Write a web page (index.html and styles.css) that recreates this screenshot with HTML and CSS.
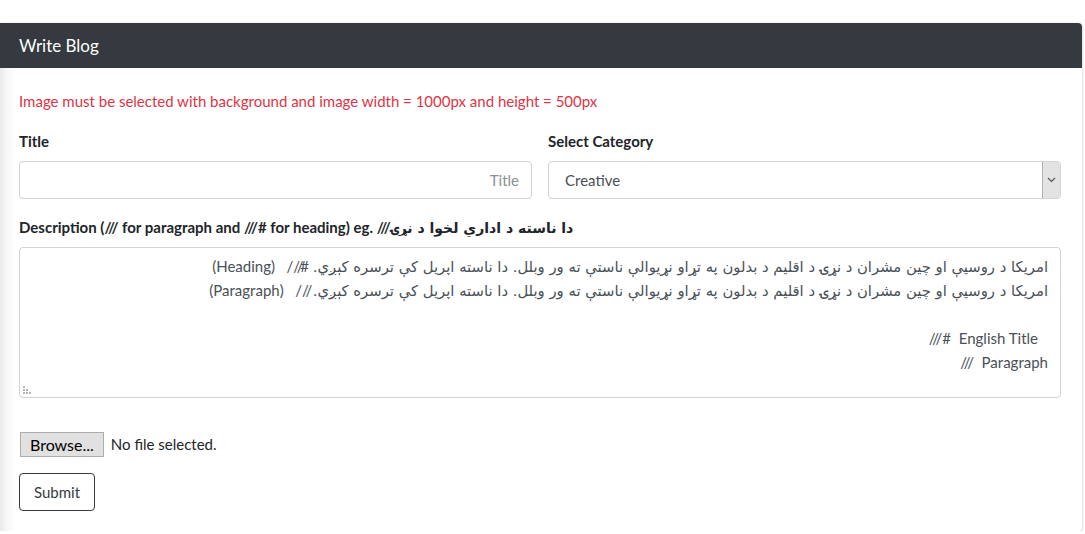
FILE: index.html
```html
<!DOCTYPE html>
<html lang="en">
<head>
<meta charset="utf-8">
<title>Write Blog</title>
<link rel="stylesheet" href="styles.css">
</head>
<body>
<div class="page">
  <div class="card">
    <div class="card-header">Write Blog</div>
    <div class="card-body">
      <p class="notice">Image must be selected with background and image width = 1000px and height = 500px</p>
      <div class="row">
        <div class="group">
          <label class="label">Title</label>
          <div class="input" dir="rtl"><span class="placeholder">Title</span></div>
        </div>
        <div class="group">
          <label class="label">Select Category</label>
          <div class="select">
            <span class="select-value">Creative</span>
            <span class="select-btn"><svg width="9" height="6" viewBox="0 0 9 6"><path d="M1 1 L4.5 4.5 L8 1" fill="none" stroke="#555" stroke-width="1.2"/></svg></span>
          </div>
        </div>
      </div>
      <div class="group">
        <label class="label">Description (/// for paragraph and ///# for heading) eg. ///<span class="ar-label">دا ناسته د اداري لخوا د نړۍ</span></label>
        <div class="textarea" dir="rtl">
          <div class="line"><span class="ar">امريکا د روسيې او چين مشران د نړۍ د اقليم د بدلون په تړاو نړيوالې ناستې ته ور وبلل. دا ناسته اپريل کې ترسره کېږي.</span> <span class="en" dir="ltr">(Heading)&nbsp;&nbsp; ///#</span></div>
          <div class="line"><span class="ar">امريکا د روسيې او چين مشران د نړۍ د اقليم د بدلون په تړاو نړيوالې ناستې ته ور وبلل. دا ناسته اپريل کې ترسره کېږي.</span> <span class="en" dir="ltr">(Paragraph)&nbsp;&nbsp; ///</span></div>
          <div class="line">&nbsp;</div>
          <div class="line"><span class="en trail" dir="ltr">///#&nbsp; English Title</span></div>
          <div class="line"><span class="en" dir="ltr">///&nbsp; Paragraph</span></div>
          <svg class="grip" width="9" height="9" viewBox="0 0 9 9"><g fill="#b5b5b5"><rect x="0" y="0" width="2" height="2"/><rect x="0" y="3" width="2" height="2"/><rect x="3" y="3" width="2" height="2"/><rect x="0" y="6" width="2" height="2"/><rect x="3" y="6" width="2" height="2"/><rect x="6" y="6" width="2" height="2"/></g></svg>
        </div>
      </div>
      <div class="file">
        <span class="browse">Browse...</span>
        <span class="file-name">No file selected.</span>
      </div>
      <button class="submit" type="button">Submit</button>
    </div>
  </div>
</div>
</body>
</html>
```
FILE: styles.css
```css
html, body {
  margin: 0;
  padding: 0;
  background: #fff;
}
body {
  font-family: "Lato", "DejaVu Sans", sans-serif;
  font-size: 15px;
  line-height: 24px;
  color: #212529;
}
.page {
  padding-top: 23px;
}
.card {
  width: 1082px;
  border-radius: 0 4px 4px 0;
  background: linear-gradient(to right, #e9e9e9 0, #f6f6f6 6px, #fff 16px);
  box-shadow: 0 1px 3px rgba(0, 0, 0, 0.25);
  overflow: hidden;
}
.card-header {
  background: #343a40;
  color: #fff;
  font-size: 17px;
  height: 45px;
  line-height: 45px;
  padding: 0 19px;
  box-sizing: border-box;
}
.card-body {
  padding: 21px 21px 20px 19px;
}
.notice {
  margin: 0 0 16px;
  color: #dc3545;
}
.row {
  display: flex;
  gap: 16px;
}
.row .group {
  flex: 1;
}
.group {
  margin-bottom: 16px;
}
.label {
  display: block;
  font-weight: 700;
  margin-bottom: 8px;
  height: 24px;
}
.ar-label {
  font-family: "DejaVu Sans", sans-serif;
  font-size: 14px;
  line-height: 1;
}
.input, .select {
  height: 38px;
  box-sizing: border-box;
  border: 1px solid #ced4da;
  border-radius: 4px;
  background: #fff;
  display: flex;
  align-items: center;
}
.input {
  padding: 0 12px;
}
.placeholder {
  color: #8a9096;
}
.select {
  padding-left: 16px;
  color: #495057;
}
.select-value {
  flex: 1;
}
.select-btn {
  width: 17px;
  align-self: stretch;
  background: #e3e3e3;
  border-left: 1px solid #b3b3b3;
  border-radius: 0 3px 3px 0;
  display: flex;
  align-items: center;
  justify-content: center;
}
.textarea {
  position: relative;
  height: 151px;
  box-sizing: border-box;
  border: 1px solid #ced4da;
  border-radius: 4px;
  background: #fff;
  padding: 6px 12px;
  color: #495057;
}
.line {
  height: 24px;
  white-space: nowrap;
}
.ar {
  font-family: "DejaVu Sans", sans-serif;
  font-size: 14.8px;
  line-height: 1;
}
.en {
  unicode-bidi: isolate;
  direction: ltr;
}
.trail {
  padding-right: 10px;
}
.grip {
  position: absolute;
  left: 3px;
  bottom: 2px;
}
.file {
  display: flex;
  align-items: center;
  gap: 7px;
  margin: 33px 0 16px 1px;
  height: 26px;
}
.browse {
  background: #e1e1e1;
  border: 1px solid #adadad;
  padding: 0 9px;
  height: 25px;
  line-height: 23px;
  box-sizing: border-box;
  color: #000;
  font-size: 16px;
}
.file-name {
  color: #212529;
}
.submit {
  font-family: inherit;
  font-size: 15px;
  color: #343a40;
  background: #fff;
  border: 1px solid #343a40;
  border-radius: 4px;
  height: 38px;
  padding: 0 14px;
  display: block;
}
```
